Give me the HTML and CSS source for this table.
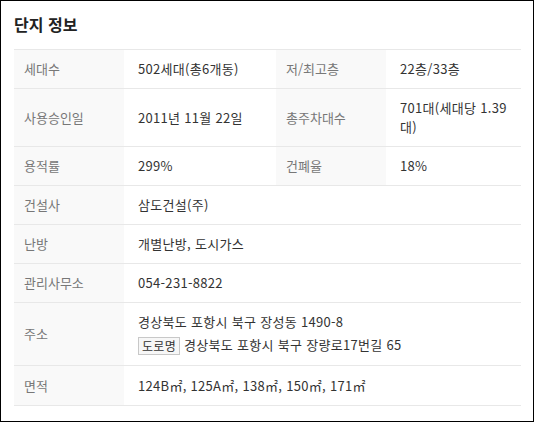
FILE: index.html
```html
<!DOCTYPE html>
<html lang="ko">
<head>
<meta charset="utf-8">
<link rel="stylesheet" href="styles.css">
</head>
<body>
<div class="panel">
  <h2 class="title">단지 정보</h2>
  <table class="info">
    <colgroup>
      <col class="c-label"><col class="c-val1"><col class="c-label"><col class="c-val2">
    </colgroup>
    <tr>
      <th>세대수</th><td>502세대(총6개동)</td>
      <th>저/최고층</th><td>22층/33층</td>
    </tr>
    <tr>
      <th>사용승인일</th><td>2011년 11월 22일</td>
      <th>총주차대수</th><td>701대(세대당 1.39대)</td>
    </tr>
    <tr>
      <th>용적률</th><td>299%</td>
      <th>건폐율</th><td>18%</td>
    </tr>
    <tr>
      <th>건설사</th><td colspan="3">삼도건설(주)</td>
    </tr>
    <tr>
      <th>난방</th><td colspan="3">개별난방, 도시가스</td>
    </tr>
    <tr>
      <th>관리사무소</th><td colspan="3">054-231-8822</td>
    </tr>
    <tr>
      <th>주소</th>
      <td colspan="3" class="addr">
        <div>경상북도 포항시 북구 장성동 1490-8</div>
        <div class="road"><span class="tag">도로명</span> 경상북도 포항시 북구 장량로17번길 65</div>
      </td>
    </tr>
    <tr class="last">
      <th>면적</th><td colspan="3">124B㎡, 125A㎡, 138㎡, 150㎡, 171㎡</td>
    </tr>
  </table>
</div>
</body>
</html>
```
FILE: styles.css
```css
html, body {
  margin: 0;
  padding: 0;
  background: #fff;
}
body {
  font-family: "Noto Sans CJK KR", "Noto Sans", sans-serif;
}
.panel {
  box-sizing: border-box;
  width: 534px;
  height: 422px;
  border: 1px solid #000;
  padding: 11px 12px 0 13px;
}
.title {
  margin: 0 0 13px;
  font-size: 16px;
  line-height: 24px;
  font-weight: bold;
  color: #222;
}
.info {
  width: 507px;
  table-layout: fixed;
  border-collapse: collapse;
  border-top: 1px solid #e8e8e8;
}
.c-label { width: 110px; }
.c-val1 { width: 152px; }
.c-val2 { width: 135px; }
.info th, .info td {
  font-size: 13px;
  line-height: 19px;
  padding: 9px 14px 10px;
  text-align: left;
  vertical-align: middle;
  border-bottom: 1px solid #e8e8e8;
}
.info th {
  font-weight: normal;
  color: #777;
  background: #f9f9f9;
  padding-left: 10px;
}
.info td {
  color: #333;
  letter-spacing: 0.3px;
}
.info .last th, .info .last td {
  padding-top: 10px;
  padding-bottom: 10px;
}
.info td.addr {
  padding-top: 9px;
  padding-bottom: 10px;
}
.road {
  margin-top: 4px;
  line-height: 19px;
}
.tag {
  display: inline-block;
  box-sizing: border-box;
  height: 18px;
  line-height: 16px;
  padding: 0 3px;
  border: 1px solid #c8c8c8;
  background: #f7f7f7;
  color: #333;
  font-size: 12px;
  letter-spacing: 0.3px;
  vertical-align: middle;
}
```
